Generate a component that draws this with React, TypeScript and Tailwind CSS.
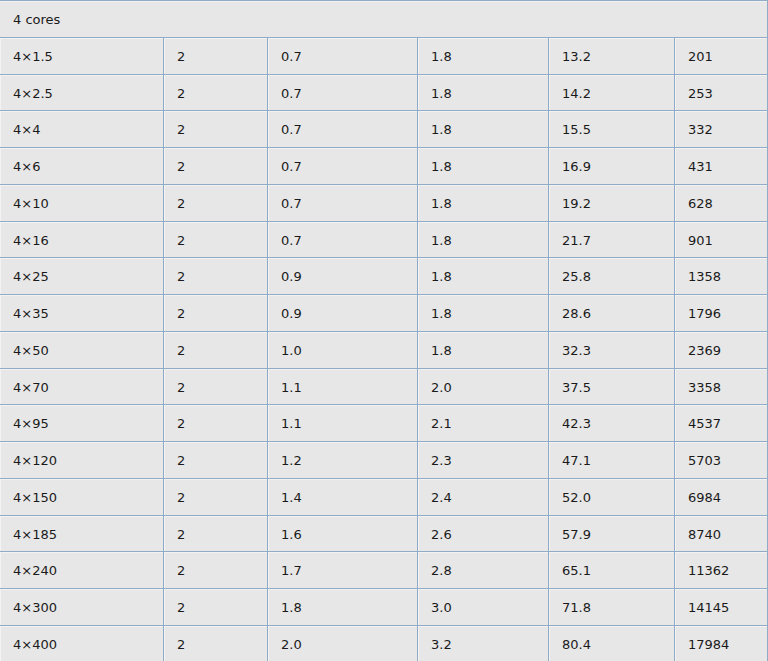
import React from "react";

const rows: string[][] = [
  ["4×1.5", "2", "0.7", "1.8", "13.2", "201"],
  ["4×2.5", "2", "0.7", "1.8", "14.2", "253"],
  ["4×4", "2", "0.7", "1.8", "15.5", "332"],
  ["4×6", "2", "0.7", "1.8", "16.9", "431"],
  ["4×10", "2", "0.7", "1.8", "19.2", "628"],
  ["4×16", "2", "0.7", "1.8", "21.7", "901"],
  ["4×25", "2", "0.9", "1.8", "25.8", "1358"],
  ["4×35", "2", "0.9", "1.8", "28.6", "1796"],
  ["4×50", "2", "1.0", "1.8", "32.3", "2369"],
  ["4×70", "2", "1.1", "2.0", "37.5", "3358"],
  ["4×95", "2", "1.1", "2.1", "42.3", "4537"],
  ["4×120", "2", "1.2", "2.3", "47.1", "5703"],
  ["4×150", "2", "1.4", "2.4", "52.0", "6984"],
  ["4×185", "2", "1.6", "2.6", "57.9", "8740"],
  ["4×240", "2", "1.7", "2.8", "65.1", "11362"],
  ["4×300", "2", "1.8", "3.0", "71.8", "14145"],
  ["4×400", "2", "2.0", "3.2", "80.4", "17984"],
];

const widths = ["w-[163px]", "w-[104px]", "w-[150px]", "w-[131px]", "w-[126px]", "flex-1"];

export default function App() {
  return (
    <div
      className="w-[768px] h-[661px] overflow-hidden bg-white text-[13px] text-[#1a1a1a]"
      style={{ fontFamily: '"DejaVu Sans", Verdana, sans-serif' }}
    >
      <div className="border-t border-r border-[#8fabc6] bg-[#e7e7e7]">
        <div className="h-[36.75px] flex items-center pl-[13px] pt-[1px] border-b border-[#8fabc6] shadow-[inset_0_1px_0_#f3f3f3]">
          4 cores
        </div>
        {rows.map((r, i) => (
          <div key={i} className="h-[36.75px] flex border-b border-[#8fabc6]">
            {r.map((c, j) => (
              <div
                key={j}
                className={`${widths[j]} flex items-center pt-[2px] shadow-[inset_1px_1px_0_#f3f3f3] ${
                  j === 0 ? "pl-[13px]" : "pl-[13px] border-l border-[#8fabc6]"
                }`}
              >
                {c}
              </div>
            ))}
          </div>
        ))}
      </div>
    </div>
  );
}
